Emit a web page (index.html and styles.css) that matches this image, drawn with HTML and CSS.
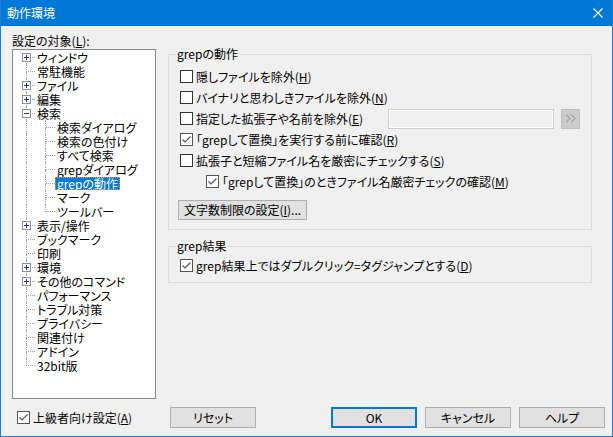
FILE: index.html
```html
<!DOCTYPE html>
<html lang="ja">
<head>
<meta charset="utf-8">
<title>動作環境</title>
<link rel="stylesheet" href="styles.css">
</head>
<body>
<div class="window">
  <div class="titlebar">
    <span class="title">動作環境</span>
    <svg class="close" width="10" height="10" viewBox="0 0 10 10"><path d="M0.5 0.5L9.5 9.5M9.5 0.5L0.5 9.5" stroke="#fff" stroke-width="1.1" fill="none"/></svg>
  </div>
  <div class="client">
    <div class="main">
      <div class="leftcol">
        <div class="tree-label">設定の対象(<u>L</u>):</div>
        <div class="tree">
          <div class="row"><span class="guide first"><span class="up"></span><span class="down"></span><svg class="exp" width="9" height="9" viewBox="0 0 9 9"><rect x="0.5" y="0.5" width="8" height="8" fill="#fff" stroke="#919191"/><path d="M2 4.5H7M4.5 2V7" stroke="#1c3a8c"/></svg></span><span class="text">ウィンドウ</span></div>
          <div class="row"><span class="guide"><span class="up"></span><span class="down"></span></span><span class="text">常駐機能</span></div>
          <div class="row"><span class="guide"><span class="up"></span><span class="down"></span><svg class="exp" width="9" height="9" viewBox="0 0 9 9"><rect x="0.5" y="0.5" width="8" height="8" fill="#fff" stroke="#919191"/><path d="M2 4.5H7M4.5 2V7" stroke="#1c3a8c"/></svg></span><span class="text">ファイル</span></div>
          <div class="row"><span class="guide"><span class="up"></span><span class="down"></span><svg class="exp" width="9" height="9" viewBox="0 0 9 9"><rect x="0.5" y="0.5" width="8" height="8" fill="#fff" stroke="#919191"/><path d="M2 4.5H7M4.5 2V7" stroke="#1c3a8c"/></svg></span><span class="text">編集</span></div>
          <div class="row"><span class="guide"><span class="up"></span><span class="down"></span><svg class="exp" width="9" height="9" viewBox="0 0 9 9"><rect x="0.5" y="0.5" width="8" height="8" fill="#fff" stroke="#919191"/><path d="M2 4.5H7" stroke="#1c3a8c"/></svg></span><span class="text">検索</span></div>
          <div class="row"><span class="guide pass"><span class="vline"></span></span><span class="guide child"><span class="up"></span><span class="down"></span></span><span class="text">検索ダイアログ</span></div>
          <div class="row"><span class="guide pass"><span class="vline"></span></span><span class="guide child"><span class="up"></span><span class="down"></span></span><span class="text">検索の色付け</span></div>
          <div class="row"><span class="guide pass"><span class="vline"></span></span><span class="guide child"><span class="up"></span><span class="down"></span></span><span class="text">すべて検索</span></div>
          <div class="row"><span class="guide pass"><span class="vline"></span></span><span class="guide child"><span class="up"></span><span class="down"></span></span><span class="text">grepダイアログ</span></div>
          <div class="row"><span class="guide pass"><span class="vline"></span></span><span class="guide child"><span class="up"></span><span class="down"></span></span><span class="text selected">grepの動作</span></div>
          <div class="row"><span class="guide pass"><span class="vline"></span></span><span class="guide child"><span class="up"></span><span class="down"></span></span><span class="text">マーク</span></div>
          <div class="row"><span class="guide pass"><span class="vline"></span></span><span class="guide child last"><span class="up"></span><span class="down"></span></span><span class="text">ツールバー</span></div>
          <div class="row"><span class="guide"><span class="up"></span><span class="down"></span><svg class="exp" width="9" height="9" viewBox="0 0 9 9"><rect x="0.5" y="0.5" width="8" height="8" fill="#fff" stroke="#919191"/><path d="M2 4.5H7M4.5 2V7" stroke="#1c3a8c"/></svg></span><span class="text">表示/操作</span></div>
          <div class="row"><span class="guide"><span class="up"></span><span class="down"></span></span><span class="text">ブックマーク</span></div>
          <div class="row"><span class="guide"><span class="up"></span><span class="down"></span></span><span class="text">印刷</span></div>
          <div class="row"><span class="guide"><span class="up"></span><span class="down"></span><svg class="exp" width="9" height="9" viewBox="0 0 9 9"><rect x="0.5" y="0.5" width="8" height="8" fill="#fff" stroke="#919191"/><path d="M2 4.5H7M4.5 2V7" stroke="#1c3a8c"/></svg></span><span class="text">環境</span></div>
          <div class="row"><span class="guide"><span class="up"></span><span class="down"></span><svg class="exp" width="9" height="9" viewBox="0 0 9 9"><rect x="0.5" y="0.5" width="8" height="8" fill="#fff" stroke="#919191"/><path d="M2 4.5H7M4.5 2V7" stroke="#1c3a8c"/></svg></span><span class="text">その他のコマンド</span></div>
          <div class="row"><span class="guide"><span class="up"></span><span class="down"></span></span><span class="text">パフォーマンス</span></div>
          <div class="row"><span class="guide"><span class="up"></span><span class="down"></span></span><span class="text">トラブル対策</span></div>
          <div class="row"><span class="guide"><span class="up"></span><span class="down"></span></span><span class="text">プライバシー</span></div>
          <div class="row"><span class="guide"><span class="up"></span><span class="down"></span></span><span class="text">関連付け</span></div>
          <div class="row"><span class="guide"><span class="up"></span><span class="down"></span></span><span class="text">アドイン</span></div>
          <div class="row"><span class="guide last"><span class="up"></span><span class="down"></span></span><span class="text">32bit版</span></div>
        </div>
      </div>
      <div class="rightcol">
        <fieldset class="group g1">
          <legend>grepの動作</legend>
          <label class="check"><span class="box"></span><span>隠しファイルを除外(<u>H</u>)</span></label>
          <label class="check"><span class="box"></span><span>バイナリと思わしきファイルを除外(<u>N</u>)</span></label>
          <div class="ext-row">
            <label class="check"><span class="box"></span><span>指定した拡張子や名前を除外(<u>E</u>)</span></label>
            <span class="textbox"></span>
            <span class="morebtn"><svg width="12" height="10" viewBox="0 0 12 10"><path d="M1 0.5L5 4.5L1 8.5M6 0.5L10 4.5L6 8.5" stroke="#8a8a8a" fill="none" stroke-width="1"/></svg></span>
          </div>
          <label class="check"><span class="box on"><svg width="11" height="11" viewBox="0 0 11 11"><path d="M1.5 5.5L4 8L9.5 2.5" stroke="#555" stroke-width="1.2" fill="none"/></svg></span><span>「grepして置換」を実行する前に確認(<u>R</u>)</span></label>
          <label class="check"><span class="box"></span><span>拡張子と短縮ファイル名を厳密にチェックする(<u>S</u>)</span></label>
          <label class="check nested"><span class="box on"><svg width="11" height="11" viewBox="0 0 11 11"><path d="M1.5 5.5L4 8L9.5 2.5" stroke="#555" stroke-width="1.2" fill="none"/></svg></span><span>「grepして置換」のときファイル名厳密チェックの確認(<u>M</u>)</span></label>
          <button class="btn limit" type="button">文字数制限の設定(<u>I</u>)...</button>
        </fieldset>
        <fieldset class="group g2">
          <legend>grep結果</legend>
          <label class="check"><span class="box on"><svg width="11" height="11" viewBox="0 0 11 11"><path d="M1.5 5.5L4 8L9.5 2.5" stroke="#555" stroke-width="1.2" fill="none"/></svg></span><span>grep結果上ではダブルクリック=タグジャンプとする(<u>D</u>)</span></label>
        </fieldset>
      </div>
    </div>
    <div class="bottom">
      <label class="check adv"><span class="box on"><svg width="11" height="11" viewBox="0 0 11 11"><path d="M1.5 5.5L4 8L9.5 2.5" stroke="#555" stroke-width="1.2" fill="none"/></svg></span><span>上級者向け設定(<u>A</u>)</span></label>
      <button class="btn dlg" type="button">リセット</button>
      <button class="btn dlg ok" type="button">OK</button>
      <button class="btn dlg" type="button">キャンセル</button>
      <button class="btn dlg" type="button">ヘルプ</button>
    </div>
  </div>
</div>
</body>
</html>
```

FILE: styles.css
```css
* { box-sizing: border-box; }
html, body { margin: 0; padding: 0; }
body {
  width: 613px;
  height: 437px;
  overflow: hidden;
  background: #f0f0f0;
  font-family: "Noto Sans CJK JP", "Noto Sans", sans-serif;
  font-size: 12px;
  font-feature-settings: "palt";
  color: #000;
}
u { text-decoration: underline; text-underline-offset: 1px; }

.window {
  width: 613px;
  height: 437px;
  border: 1px solid #1a80d6;
  border-top: none;
  display: flex;
  flex-direction: column;
}
.titlebar {
  height: 26px;
  flex: none;
  background: #0078d7;
  color: #fff;
  display: flex;
  align-items: center;
  justify-content: space-between;
  padding: 0 9px 0 6px;
  font-size: 12px;
  line-height: 14px;
}
.close { display: block; }

.client { flex: 1; display: flex; flex-direction: column; }
.main { display: flex; gap: 12px; padding-left: 11px; }
.leftcol { width: 144px; flex: none; display: flex; flex-direction: column; }
.tree-label { height: 23px; padding-top: 8px; line-height: 14px; }
.tree {
  height: 350px;
  background: #fff;
  border: 1px solid #828790;
  padding-left: 3px;
}

.row { display: flex; height: 14px; align-items: center; }
.guide { display: grid; width: 19px; height: 14px; flex: none; }
.guide.child { width: 20px; }
.guide > .up, .guide > .down, .guide > .vline, .guide > .exp { grid-area: 1 / 1; }
.guide .up {
  align-self: start;
  height: 8px;
  margin-left: 10px;
  border-left: 1px dotted #a0a0a0;
  border-bottom: 1px dotted #a0a0a0;
}
.guide .down {
  align-self: end;
  height: 6px;
  margin-left: 10px;
  border-left: 1px dotted #a0a0a0;
}
.guide .vline {
  margin-left: 10px;
  height: 14px;
  border-left: 1px dotted #a0a0a0;
}
.guide.first .up { border-left: none; }
.guide.last .down { border-left: none; }
.guide .exp { align-self: center; margin-left: 6px; display: block; }
.text {
  line-height: 13px;
  height: 13px;
  padding: 0 2px;
  white-space: nowrap;
}
.text.selected {
  background: #0078d7;
  color: #fff;
  outline: 1px dotted #e8a13a;
  outline-offset: -1px;
}

.rightcol { width: 424px; flex: none; display: flex; flex-direction: column; }
.group {
  margin: 0;
  min-width: 0;
  border: 1px solid #dcdcdc;
  display: flex;
  flex-direction: column;
}
.group legend {
  padding: 0 1px;
  margin-left: -4px;
  line-height: 14px;
}
.g1 { margin-top: 21px; padding: 5px 11px 9px 11px; }
.g2 { margin-top: 9px; padding: 2px 11px 6px 11px; }

.check {
  display: flex;
  align-items: center;
  height: 21px;
  gap: 3px;
  white-space: nowrap;
  line-height: 14px;
}
.check.nested { padding-left: 26px; }
.box {
  width: 13px;
  height: 13px;
  flex: none;
  border: 1px solid #333;
  background: #fff;
  display: flex;
  align-items: center;
  justify-content: center;
}
.box.on { border-color: #555; }
.box svg { display: block; }

.ext-row { display: flex; align-items: center; height: 21px; }
.textbox {
  margin-left: auto;
  width: 166px;
  height: 20px;
  border: 1px solid #cccccc;
  background: #f0f0f0;
  box-shadow: inset 0 0 0 1px #fff;
}
.morebtn {
  margin-left: 7px;
  width: 19px;
  height: 20px;
  background: #cccccc;
  border: 1px solid #bfbfbf;
  display: flex;
  align-items: center;
  justify-content: center;
}
.morebtn svg { display: block; }

.btn {
  font: inherit;
  font-feature-settings: "palt";
  color: #000;
  background: #e1e1e1;
  border: 1px solid #adadad;
  padding: 0;
  margin: 0;
  line-height: 14px;
}
.btn.limit {
  margin-top: 8px;
  margin-left: -2px;
  width: 129px;
  height: 20px;
  align-self: flex-start;
}

.bottom {
  flex: 1;
  display: flex;
  align-items: center;
  padding: 0 7px 0 16px;
}
.check.adv { width: 153px; flex: none; }
.btn.dlg { width: 86px; height: 21px; flex: none; }
.btn.ok { margin-left: auto; border: 2px solid #0078d7; }
.btn.ok + .btn, .btn.ok + .btn + .btn { margin-left: 8px; }
```
